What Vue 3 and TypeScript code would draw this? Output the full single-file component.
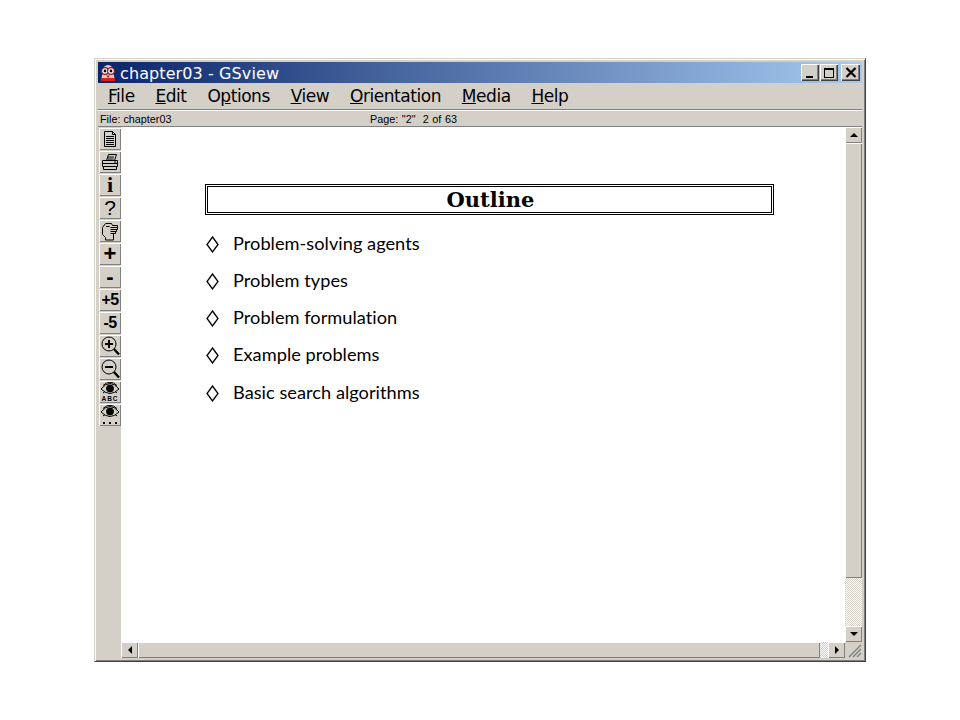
<script setup lang="ts">
const menus = [
  { key: 'F', rest: 'ile' },
  { key: 'E', rest: 'dit' },
  { key: 'O', rest: 'ptions' },
  { key: 'V', rest: 'iew' },
  { key: 'O', rest: 'rientation' },
  { key: 'M', rest: 'edia' },
  { key: 'H', rest: 'elp' },
]

const bullets = [
  'Problem-solving agents',
  'Problem types',
  'Problem formulation',
  'Example problems',
  'Basic search algorithms',
]
</script>

<template>
  <div class="page">
    <div class="window">
      <div class="titlebar">
        <svg class="app-icon" width="16" height="16" viewBox="0 0 16 16">
          <path d="M1 15 L3 7 Q3 0 8 0 Q13 0 13 7 L15 15 Z" fill="#f0c8c0" />
          <path d="M1 13 H15 V16 H1 Z" fill="#d82020" />
          <circle cx="5" cy="6" r="3.4" fill="#fff" stroke="#802020" stroke-width="1.2" />
          <circle cx="11" cy="6" r="3.4" fill="#fff" stroke="#802020" stroke-width="1.2" />
          <circle cx="5" cy="6" r="1.4" fill="#000" />
          <circle cx="11" cy="6" r="1.4" fill="#000" />
          <path d="M6 10.5 H10 L8 13 Z" fill="#c02020" />
        </svg>
        <span class="title-text">chapter03 - GSview</span>
        <div class="caption-btns">
          <button class="cap"><span class="min-glyph"></span></button>
          <button class="cap"><span class="max-glyph"></span></button>
          <button class="cap close">
            <svg width="12" height="11" viewBox="0 0 12 11">
              <path d="M1.5 1 L10.5 10 M10.5 1 L1.5 10" stroke="#000" stroke-width="2.2" />
            </svg>
          </button>
        </div>
      </div>

      <div class="menubar">
        <span v-for="m in menus" :key="m.key + m.rest" class="menu-item">
          <template v-if="m.rest === 'ptions'">O<u>p</u>tions</template>
          <template v-else><u>{{ m.key }}</u>{{ m.rest }}</template>
        </span>
      </div>

      <div class="statusbar">
        <span class="status-file">File: chapter03</span>
        <span class="status-page">Page: "2"&nbsp; 2 of 63</span>
      </div>

      <div class="body">
        <div class="toolbar">
          <button class="tool">
            <svg width="16" height="16" viewBox="0 0 16 16" fill="none" stroke="#000">
              <path d="M2.5 .5 H10.5 L13.5 3.5 V15.5 H2.5 Z M10.5 .5 V3.5 H13.5" />
              <path d="M4 5.5 H12 M4 7.5 H12 M4 9.5 H12 M4 11.5 H12 M4 13.5 H12" />
            </svg>
          </button>
          <button class="tool">
            <svg width="18" height="17" viewBox="0 0 18 17" fill="none" stroke="#000">
              <path d="M5.5 6.5 L7.5 .5 H15.5 L13.5 6.5" />
              <path d="M7 3 H13 M6.5 5 H12.5" />
              <path d="M1.5 6.5 H16.5 V12.5 H1.5 Z" />
              <path d="M1.5 9.5 H16.5" />
              <path d="M2.5 12.5 V15.5 H15.5 V12.5" />
              <path d="M13 8 H15" />
            </svg>
          </button>
          <button class="tool tool-serif">i</button>
          <button class="tool tool-q">?</button>
          <button class="tool">
            <svg width="18" height="19" viewBox="0 0 18 19" fill="none" stroke="#000">
              <path d="M1.5 5.5 L4.5 1.5 H10.5 L11.5 3.5 H16.5 V5.5 H9.5 M16.5 5.5 V7.5 H9.5 M15.5 7.5 V9.5 H9.5 M14.5 9.5 V11.5 H9.5" />
              <path d="M5 4.5 H8.5" />
              <path d="M1.5 5.5 V12.5 L4.5 15.5 V18 H12.5 V11.5" />
            </svg>
          </button>
          <button class="tool tool-sym">+</button>
          <button class="tool tool-sym">-</button>
          <button class="tool tool-five">+5</button>
          <button class="tool tool-five">-5</button>
          <button class="tool">
            <svg width="19" height="20" viewBox="0 0 19 20" fill="none" stroke="#000">
              <circle cx="8" cy="8" r="7" />
              <path d="M4 8 H12 M8 4 V12" stroke-width="2" />
              <path d="M13 13 L18 18.5" stroke-width="2.4" />
            </svg>
          </button>
          <button class="tool">
            <svg width="19" height="20" viewBox="0 0 19 20" fill="none" stroke="#000">
              <circle cx="8" cy="8" r="7" />
              <path d="M4 8 H12" stroke-width="2" />
              <path d="M13 13 L18 18.5" stroke-width="2.4" />
            </svg>
          </button>
          <button class="tool">
            <svg width="20" height="20" viewBox="0 0 20 20" fill="none" stroke="#000">
              <path d="M1 7 Q10 -4 19 7 Q10 16 1 7 Z" />
              <path d="M3 3.5 Q10 -3 17 3.5" />
              <circle cx="10" cy="6.5" r="3.5" fill="#000" />
              <path d="M3 11 L5 9.5 M17 11 L15 9.5" />
              <text x="10" y="19" text-anchor="middle" class="abc" fill="#000" stroke="none">ABC</text>
            </svg>
          </button>
          <button class="tool">
            <svg width="20" height="20" viewBox="0 0 20 20" fill="none" stroke="#000">
              <path d="M1 7 Q10 -4 19 7 Q10 16 1 7 Z" />
              <path d="M3 3.5 Q10 -3 17 3.5" />
              <circle cx="10" cy="6.5" r="3.5" fill="#000" />
              <path d="M3 11 L5 9.5 M17 11 L15 9.5" />
              <path d="M3 17 H5 V19 H3 Z M9 17 H11 V19 H9 Z M15 17 H17 V19 H15 Z" fill="#000" stroke="none" />
            </svg>
          </button>
        </div>

        <div class="content-col">
          <div class="doc-row">
            <main class="doc">
              <div class="outline-box">
                <h1 class="outline-title">Outline</h1>
              </div>
              <ul class="bullets">
                <li v-for="b in bullets" :key="b">
                  <svg class="diamond" width="13" height="17" viewBox="0 0 13 17" fill="none" stroke="#000" stroke-width="1.3">
                    <path d="M6.5 1 L12 8.5 L6.5 16 L1 8.5 Z" />
                  </svg>
                  <span class="bullet-text">{{ b }}</span>
                </li>
              </ul>
            </main>
            <div class="vscroll">
              <button class="sb-btn"><span class="arrow up"></span></button>
              <div class="v-thumb"></div>
              <div class="v-track"></div>
              <button class="sb-btn"><span class="arrow down"></span></button>
            </div>
          </div>
          <div class="hscroll">
            <button class="sb-btn"><span class="arrow left"></span></button>
            <div class="h-thumb"></div>
            <div class="h-track"></div>
            <button class="sb-btn"><span class="arrow right"></span></button>
            <div class="grip">
              <svg width="16" height="16" viewBox="0 0 16 16" fill="none" stroke="#808080">
                <path d="M15 3 L3 15 M15 7 L7 15 M15 11 L11 15" stroke-width="1.4" />
              </svg>
            </div>
          </div>
        </div>
      </div>
    </div>
  </div>
</template>

<style>
html,
body {
  margin: 0;
  background: #fff;
}
</style>

<style scoped>
.page {
  width: 960px;
  height: 720px;
  box-sizing: border-box;
  padding: 58px 94px;
  background: #fff;
}

.window {
  width: 772px;
  height: 604px;
  box-sizing: border-box;
  display: flex;
  flex-direction: column;
  background: #d4d0c8;
  border: 1px solid;
  border-color: #d4d0c8 #404040 #404040 #d4d0c8;
  box-shadow: inset 1px 1px 0 #fff, inset -1px -1px 0 #808080;
  padding: 3px;
  font-family: "Liberation Sans", Arial, sans-serif;
}

.titlebar {
  height: 21px;
  flex: none;
  display: flex;
  align-items: center;
  padding-left: 2px;
  background: linear-gradient(to right, #0a246a, #a6caf0);
  color: #fff;
}

.app-icon {
  flex: none;
  margin-right: 4px;
}

.title-text {
  font-family: "DejaVu Sans", sans-serif;
  font-size: 16px;
  line-height: 21px;
  letter-spacing: 0.1px;
  white-space: nowrap;
  padding-top: 2px;
}

.caption-btns {
  margin-left: auto;
  display: flex;
  gap: 1px;
  padding-right: 2px;
}

.cap {
  width: 18px;
  height: 17px;
  padding: 0;
  margin: 0;
  display: flex;
  align-items: center;
  justify-content: center;
  background: #d4d0c8;
  border: none;
  box-shadow: inset 1px 1px 0 #fff, inset -1px -1px 0 #404040, inset -2px -2px 0 #808080;
}

.cap.close {
  margin-left: 2px;
  width: 19px;
}

.min-glyph {
  width: 7px;
  height: 2px;
  background: #000;
  margin-top: 8px;
  margin-right: 2px;
}

.max-glyph {
  width: 10px;
  height: 10px;
  box-sizing: border-box;
  border: 1px solid #000;
  border-top-width: 2px;
}

.menubar {
  height: 27px;
  flex: none;
  display: flex;
  align-items: center;
  box-sizing: border-box;
  padding: 0 0 0 10px;
  gap: 20.8px;
  border-bottom: 1px solid #808080;
  font-family: "DejaVu Sans", sans-serif;
  font-size: 17px;
  letter-spacing: -0.45px;
  color: #000;
  white-space: nowrap;
}

.statusbar {
  height: 17px;
  flex: none;
  display: flex;
  align-items: center;
  box-sizing: border-box;
  border-top: 1px solid #fff;
  border-bottom: 1px solid #808080;
  font-size: 10.8px;
  color: #000;
}

.status-file {
  width: 272px;
  padding-left: 2px;
  flex: none;
  box-sizing: border-box;
}

.status-page {
  white-space: nowrap;
  word-spacing: 0.6px;
}

.body {
  flex: 1;
  min-height: 0;
  display: flex;
}

.toolbar {
  width: 23px;
  flex: none;
  display: flex;
  flex-direction: column;
  gap: 1px;
  padding-top: 1px;
  box-sizing: border-box;
}

.tool {
  width: 22px;
  height: 22px;
  flex: none;
  padding: 0;
  margin: 0 0 0 1px;
  display: flex;
  align-items: center;
  justify-content: center;
  border: none;
  background: #d4d0c8;
  color: #000;
  box-shadow: inset 1px 1px 0 #fff, inset -1px -1px 0 #808080;
  font-family: "Liberation Sans", Arial, sans-serif;
}

.tool-serif {
  font-family: "Liberation Serif", serif;
  font-weight: 700;
  font-size: 22px;
}

.tool-q {
  font-size: 21px;
}

.tool-sym {
  font-size: 22px;
  font-weight: 700;
}

.tool-five {
  font-size: 16px;
  font-weight: 700;
  letter-spacing: -0.5px;
}

.abc {
  font-family: "Liberation Sans", sans-serif;
  font-size: 6.5px;
  font-weight: 700;
  letter-spacing: 1px;
}

.content-col {
  flex: 1;
  min-width: 0;
  display: flex;
  flex-direction: column;
}

.doc-row {
  flex: 1;
  min-height: 0;
  display: flex;
}

.doc {
  flex: 1;
  min-width: 0;
  background: #fff;
  padding: 57px 71px 0 84px;
  box-sizing: border-box;
}

.outline-box {
  height: 31px;
  box-sizing: border-box;
  border: 1px solid #000;
  padding: 1px;
}

.outline-title {
  height: 100%;
  margin: 0;
  box-sizing: border-box;
  border: 1px solid #000;
  display: flex;
  align-items: center;
  justify-content: center;
  padding-left: 2px;
  font-family: "DejaVu Serif", serif;
  font-size: 21px;
  font-weight: 700;
  line-height: 1;
}

.bullets {
  list-style: none;
  margin: 17px 0 0;
  padding: 0;
  display: flex;
  flex-direction: column;
  gap: 13.3px;
}

.bullets li {
  display: flex;
  align-items: center;
  height: 24px;
  font-family: Lato, sans-serif;
  font-size: 18.2px;
  color: #000;
  white-space: nowrap;
}

.bullet-text {
  margin-bottom: 3px;
  letter-spacing: 0.03px;
}

.diamond {
  flex: none;
  margin-left: 1px;
  margin-right: 14px;
}

.vscroll {
  width: 17px;
  flex: none;
  display: flex;
  flex-direction: column;
}

.sb-btn {
  width: 17px;
  height: 16px;
  flex: none;
  padding: 0;
  margin: 0;
  border: none;
  display: flex;
  align-items: center;
  justify-content: center;
  background: #d4d0c8;
  box-shadow: inset 1px 1px 0 #fff, inset -1px -1px 0 #808080;
}

.v-thumb {
  height: 435px;
  flex: none;
  background: #d4d0c8;
  box-shadow: inset 1px 1px 0 #fff, inset -1px -1px 0 #808080;
}

.v-track,
.h-track {
  flex: 1;
  background-color: #fff;
  background-image: repeating-conic-gradient(#d4d0c8 0 25%, #fff 0 50%);
  background-size: 2px 2px;
}

.arrow {
  width: 0;
  height: 0;
  display: block;
  border-style: solid;
  border-color: transparent;
}

.arrow.up {
  border-width: 0 4px 4px;
  border-bottom-color: #000;
}

.arrow.down {
  border-width: 4px 4px 0;
  border-top-color: #000;
}

.arrow.left {
  border-width: 4px 4px 4px 0;
  border-right-color: #000;
}

.arrow.right {
  border-width: 4px 0 4px 4px;
  border-left-color: #000;
}

.hscroll {
  height: 16px;
  flex: none;
  display: flex;
}

.h-thumb {
  width: 682px;
  flex: none;
  background: #d4d0c8;
  box-shadow: inset 1px 1px 0 #fff, inset -1px -1px 0 #808080;
}

.grip {
  width: 17px;
  flex: none;
  display: flex;
  align-items: flex-end;
  justify-content: flex-end;
  background: #d4d0c8;
}
</style>
